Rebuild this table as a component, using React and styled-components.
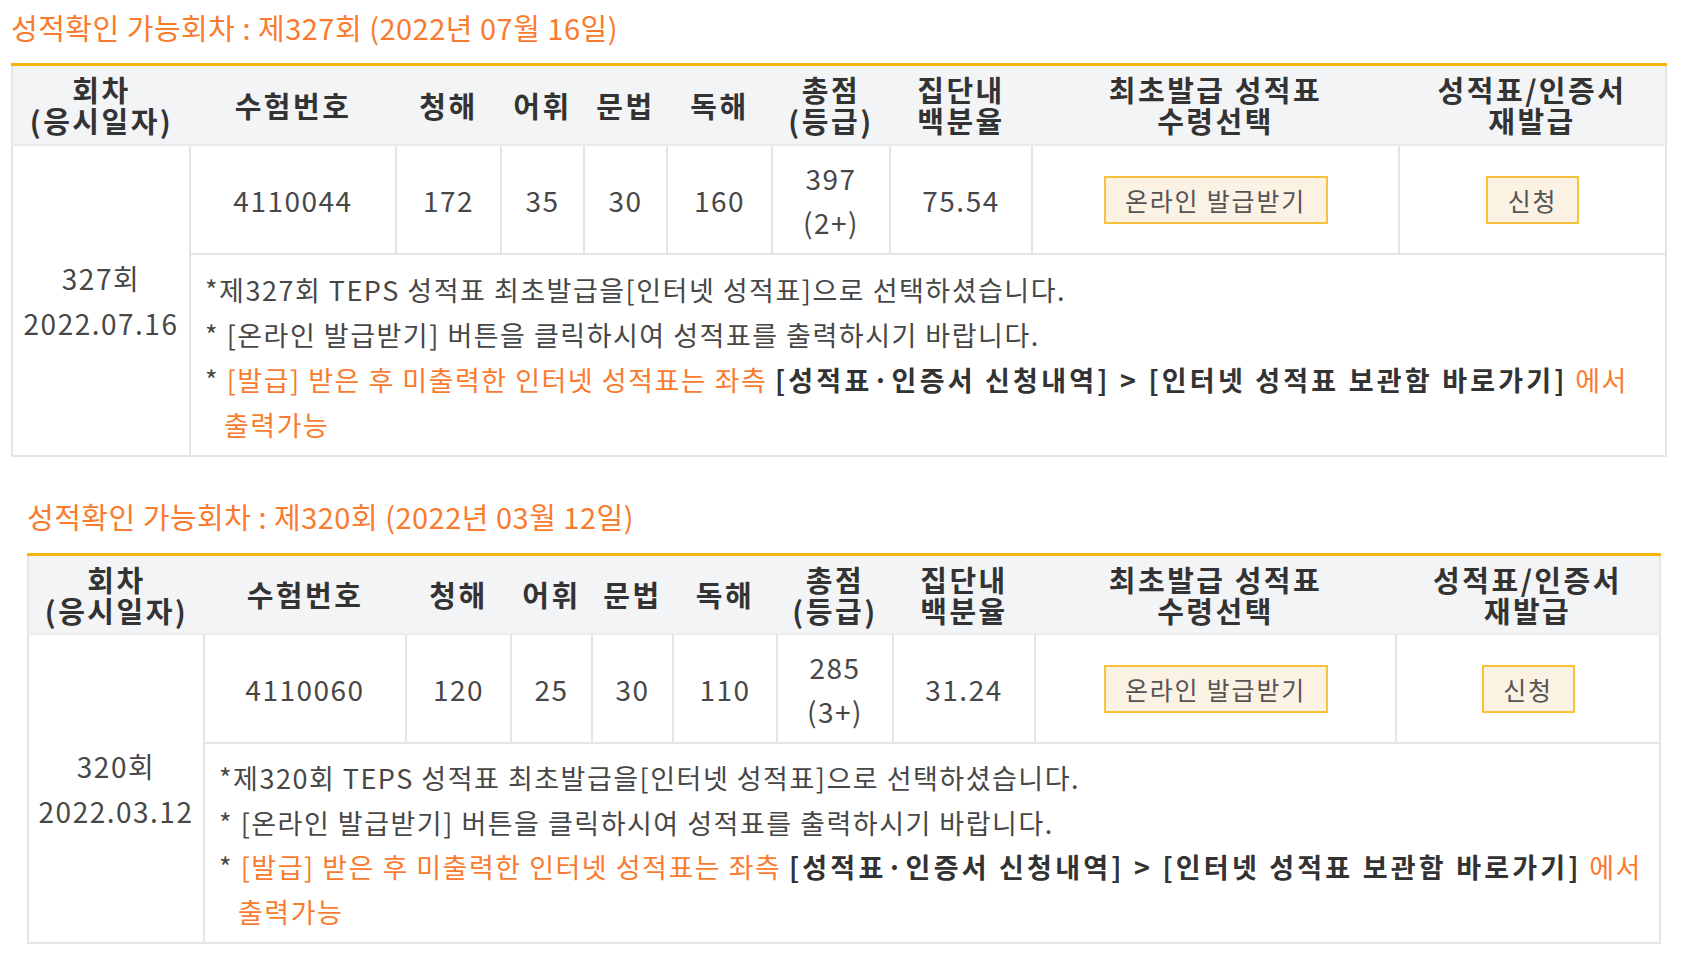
import React from 'react'
import styled, { createGlobalStyle } from 'styled-components'

const GlobalStyle = createGlobalStyle`
    body {
        margin: 0;
        background: #fff;
        font-family: "Noto Sans CJK KR", "Noto Sans", sans-serif;
        color: #444;
    }
`

const Page = styled.div`
    display: flex;
    flex-direction: column;
    gap: 42px;
    padding-top: 10px;
`

const Section = styled.section`
    margin-left: ${p => p.$left}px;
    width: ${p => p.$width}px;
`

const Title = styled.h2`
    margin: 0 0 ${p => p.$gap}px;
    font-size: 29px;
    font-weight: 400;
    line-height: 34px;
    letter-spacing: 0.5px;
    color: #f97b2f;
`

const Table = styled.table`
    width: 100%;
    table-layout: fixed;
    border-collapse: collapse;
    border: 2px solid #e5e5e5;
    border-top: 3px solid #f6b40c;
`

const HeadCell = styled.th`
    height: ${p => p.$height}px;
    padding: 0;
    background: #f3f4f6;
    border-bottom: 2px solid #ebebeb;
    font-size: 29px;
    font-weight: 700;
    line-height: 31px;
    letter-spacing: 2.5px;
    color: #333;
    text-align: center;
    vertical-align: middle;
`

const Cell = styled.td`
    height: ${p => p.$height}px;
    padding: 0;
    border: 2px solid #e5e5e5;
    font-size: 28px;
    line-height: 44px;
    letter-spacing: 1.5px;
    color: #474747;
    text-align: center;
    vertical-align: middle;
`

const RoundCell = styled(Cell)`
    line-height: 45px;
`

const NoteCell = styled.td`
    padding: ${p => p.$padTop}px 8px 8px 14px;
    border: 2px solid #e5e5e5;
    text-align: left;
`

const NoteList = styled.ul`
    list-style: none;
    margin: 0;
    padding: 0;
`

const Note = styled.li`
    padding-left: 19px;
    text-indent: -19px;
    font-size: 27px;
    line-height: ${p => p.$lineHeight}px;
    letter-spacing: 1.5px;
    color: #474747;
    white-space: nowrap;
`

const Accent = styled.span`
    color: #f97b2f;
`

const Strong = styled.b`
    font-weight: 700;
    letter-spacing: 3.2px;
    color: #333;
`

const ActionButton = styled.button`
    width: ${p => p.$width}px;
    height: 48px;
    padding: 0;
    background: #fcf2e4;
    border: 2px solid #f8c23b;
    border-radius: 0;
    font-family: inherit;
    font-size: 25px;
    line-height: 44px;
    letter-spacing: 1.8px;
    color: #555;
    cursor: pointer;
`

const rounds = [
    {
        left: 11, width: 1654, gap: 19, headHeight: 78, dataHeight: 107, lineHeight: 45, padTop: 12,
        title: '성적확인 가능회차 : 제327회 (2022년 07월 16일)',
        round: '327회', date: '2022.07.16',
        cols: [178, 206, 105, 83, 83, 105, 118, 142, 367, 267],
        scores: ['4110044', '172', '35', '30', '160'], total: '397', grade: '(2+)', pct: '75.54',
    },
    {
        left: 27, width: 1632, gap: 20, headHeight: 77, dataHeight: 107, lineHeight: 44.5, padTop: 12,
        title: '성적확인 가능회차 : 제320회 (2022년 03월 12일)',
        round: '320회', date: '2022.03.12',
        cols: [176, 202, 105, 81, 81, 104, 116, 142, 361, 264],
        scores: ['4110060', '120', '25', '30', '110'], total: '285', grade: '(3+)', pct: '31.24',
    },
]

const headers = [
    ['회차', '(응시일자)'], ['수험번호'], ['청해'], ['어휘'], ['문법'], ['독해'],
    ['총점', '(등급)'], ['집단내', '백분율'], ['최초발급 성적표', '수령선택'], ['성적표/인증서', '재발급'],
]

const RoundTable = ({ r }) => (
    <Section $left={r.left} $width={r.width}>
        <Title $gap={r.gap}>{r.title}</Title>
        <Table>
            <colgroup>
                {r.cols.map((w, i) => <col key={i} style={{ width: w }} />)}
            </colgroup>
            <thead>
                <tr>
                    {headers.map((h, i) => (
                        <HeadCell key={i} $height={r.headHeight}>
                            {h.map((line, j) => <React.Fragment key={j}>{j > 0 && <br />}{line}</React.Fragment>)}
                        </HeadCell>
                    ))}
                </tr>
            </thead>
            <tbody>
                <tr>
                    <RoundCell rowSpan={2} $height={r.dataHeight}>
                        {r.round}<br />{r.date}
                    </RoundCell>
                    {r.scores.map((s, i) => <Cell key={i} $height={r.dataHeight}>{s}</Cell>)}
                    <Cell $height={r.dataHeight}>{r.total}<br />{r.grade}</Cell>
                    <Cell $height={r.dataHeight}>{r.pct}</Cell>
                    <Cell $height={r.dataHeight}><ActionButton $width={224}>온라인 발급받기</ActionButton></Cell>
                    <Cell $height={r.dataHeight}><ActionButton $width={93}>신청</ActionButton></Cell>
                </tr>
                <tr>
                    <NoteCell colSpan={9} $padTop={r.padTop}>
                        <NoteList>
                            <Note $lineHeight={r.lineHeight}>*제{r.round} TEPS 성적표 최초발급을[인터넷 성적표]으로 선택하셨습니다.</Note>
                            <Note $lineHeight={r.lineHeight}>* [온라인 발급받기] 버튼을 클릭하시여 성적표를 출력하시기 바랍니다.</Note>
                            <Note $lineHeight={r.lineHeight}>
                                * <Accent>[발급] 받은 후 미출력한 인터넷 성적표는 좌측 </Accent>
                                <Strong>[성적표·인증서 신청내역] &gt; [인터넷 성적표 보관함 바로가기]</Strong>
                                <Accent> 에서<br />출력가능</Accent>
                            </Note>
                        </NoteList>
                    </NoteCell>
                </tr>
            </tbody>
        </Table>
    </Section>
)

export default function App() {
    return (
        <>
            <GlobalStyle />
            <Page>
                {rounds.map(r => <RoundTable key={r.round} r={r} />)}
            </Page>
        </>
    )
}
